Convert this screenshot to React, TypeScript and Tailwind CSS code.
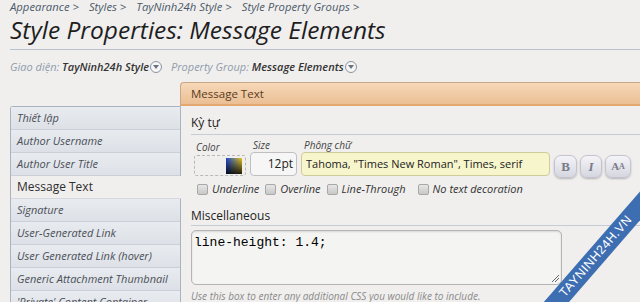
import React from "react";

const sideItems = [
  "Thiết lập",
  "Author Username",
  "Author User Title",
  "Message Text",
  "Signature",
  "User-Generated Link",
  "User Generated Link (hover)",
  "Generic Attachment Thumbnail",
  "'Private' Content Container",
];

function DropCircle() {
  return (
    <span className="inline-flex items-center justify-center w-[12px] h-[12px] rounded-full border border-[#8a94a0] bg-[#f6f6f6] ml-[1px] align-middle">
      <svg width="6" height="4" viewBox="0 0 6 4"><path d="M0 0h6L3 4z" fill="#6a7480" /></svg>
    </span>
  );
}

function Check({ label }: { label: string }) {
  return (
    <span className="flex items-center gap-[4px]">
      <span className="w-[11px] h-[11px] rounded-[2px] border border-[#a8a8a8] bg-[linear-gradient(#e6e6e6,#c8c8c8)]" />
      <span className="italic text-[11px] text-[#333]">{label}</span>
    </span>
  );
}

function StyleBtn({ children, extra }: { children: React.ReactNode; extra: string }) {
  return (
    <span className={`flex items-center justify-center h-[23px] rounded-[7px] border border-[#c4c4d0] bg-[linear-gradient(#f4f4f8,#d6d6e0)] shadow-[0_1px_2px_rgba(0,0,0,0.25)] text-[#7a7a88] font-bold ${extra}`} style={{ fontFamily: '"Liberation Serif", serif' }}>
      {children}
    </span>
  );
}

export default function App() {
  return (
    <div className="relative w-[640px] h-[302px] overflow-hidden bg-[#f0efee] text-[#333]" style={{ fontFamily: '"Open Sans", "DejaVu Sans", sans-serif' }}>
      {/* breadcrumb */}
      <div className="pl-[10px] h-[14px] text-[11.3px] leading-[13px] italic text-[#4c5a6a] flex gap-[10px]">
        <span>Appearance &gt;</span>
        <span>Styles &gt;</span>
        <span>TayNinh24h Style &gt;</span>
        <span>Style Property Groups &gt;</span>
      </div>

      {/* title */}
      <h1 className="pl-[10px] h-[35px] text-[24.5px] leading-[32px] italic text-[#1e1e1e]">
        Style Properties: Message Elements
      </h1>
      <div className="ml-[10px] border-t border-[#b8c2cc]" />

      {/* filters */}
      <div className="pl-[10px] mt-[9px] h-[16px] flex items-center text-[11px] italic">
        <span className="text-[#8f9cab]">Giao diện:&nbsp;</span>
        <span className="text-[#333] font-semibold">TayNinh24h Style</span>
        <DropCircle />
        <span className="text-[#8f9cab] ml-[9px]">Property Group:&nbsp;</span>
        <span className="text-[#333] font-semibold">Message Elements</span>
        <DropCircle />
      </div>

      {/* main */}
      <div className="flex mt-[7px]">
        {/* sidebar */}
        <div className="w-[170px] ml-[10px] mt-[24px] flex flex-col border-l border-t border-[#aab4c0] rounded-tl-[3px]">
          {sideItems.map((it) =>
            it === "Message Text" ? (
              <div key={it} className="relative z-10 h-[23px] -mr-px pl-[6px] flex items-center bg-[#f0efee] text-[12px] text-[#2e2e2e] border-b border-[#d4d8de]">
                {it}
              </div>
            ) : (
              <div key={it} className="h-[23px] pl-[6px] flex items-center bg-[linear-gradient(#e8ebef,#dde1e7)] italic text-[11px] text-[#4a4f58] border-b border-[#c9d0d8] shrink-0">
                {it}
              </div>
            )
          )}
        </div>

        {/* content panel */}
        <div className="flex-1 flex flex-col">
          <div className="h-[24px] pl-[10px] flex items-center rounded-tl-[4px] border-t border-l border-[#c8a888] border-b-2 border-b-[#e2a870] bg-[linear-gradient(#f6d8b8,#ebbf94)] text-[11.5px] text-[#5a3c22]">
            Message Text
          </div>
          <div className="flex-1 border-l border-[#aab4c0] pl-[10px] pt-[9px]">
            <div className="text-[12px] text-[#222] pb-[3px] border-b border-[#c4ccd6] leading-[16px]">Kỳ tự</div>

            <div className="flex gap-[4px] mt-[4px] pl-[3px] items-end">
              <div className="flex flex-col w-[52px]">
                <span className="italic text-[10px] leading-[13px] text-[#444] pl-[2px]">Color</span>
                <div className="h-[21px] mt-[1px] border border-dashed border-[#b8b8b8] rounded-[3px] flex items-center justify-end pr-[3px]">
                  <span className="w-[16px] h-[16px] bg-[linear-gradient(to_bottom,transparent,rgba(0,0,0,0.85)),linear-gradient(to_right,#1a4ad8,#e8c820)]" />
                </div>
              </div>
              <div className="flex flex-col w-[47px]">
                <span className="italic text-[10px] leading-[13px] text-[#444] pl-[3px]">Size</span>
                <div className="h-[24px] border border-[#c0c0c0] rounded-[4px] bg-[#f6f6f6] flex items-center justify-end pr-[3px] text-[12px] text-[#222]">12pt</div>
              </div>
              <div className="flex flex-col w-[249px]">
                <span className="italic text-[10px] leading-[13px] text-[#444] pl-[3px]">Phông chữ</span>
                <div className="h-[24px] border border-[#cfcc9a] rounded-[4px] bg-[#f7f5cc] flex items-center pl-[4px] text-[11px] text-[#222] whitespace-nowrap">
                  Tahoma, "Times New Roman", Times, serif
                </div>
              </div>
              <div className="flex gap-[3px] mb-[-2px]">
                <StyleBtn extra="w-[23px] text-[13px]">B</StyleBtn>
                <StyleBtn extra="w-[22px] text-[13px] italic">I</StyleBtn>
                <StyleBtn extra="w-[26px] text-[11px]"><span>A</span><span className="text-[8px]">A</span></StyleBtn>
              </div>
            </div>

            <div className="flex items-center gap-[6px] mt-[5px] pl-[6px]">
              <Check label="Underline" />
              <Check label="Overline" />
              <Check label="Line-Through" />
              <span className="w-[0px]" />
              <Check label="No text decoration" />
            </div>

            <div className="mt-[10px] text-[12px] text-[#222] pb-[1px] border-b border-[#c4ccd6] leading-[16px]">Miscellaneous</div>

            <div className="relative mt-[4px] w-[371px] h-[55px] rounded-[5px] border border-[#b4b4b4] bg-[#f4f4f3] shadow-[inset_0_1px_2px_rgba(0,0,0,0.12)] pl-[2px] pt-[4px] text-[13px] leading-[15px] text-[#000]" style={{ fontFamily: '"Liberation Mono", monospace' }}>
              line-height: 1.4;
              <svg className="absolute right-[2px] bottom-[2px]" width="8" height="8" viewBox="0 0 8 8">
                <path d="M1 8L8 1M4 8L8 4" stroke="#666" strokeWidth="1" />
              </svg>
            </div>
            <div className="mt-[4px] italic text-[10px] text-[#8a8a8a]">Use this box to enter any additional CSS you would like to include.</div>
          </div>
        </div>
      </div>

      {/* watermark */}
      <div className="absolute left-[491px] top-[247px] w-[210px] h-[19px] rotate-[-49deg] bg-[#3e6eb2] flex items-center justify-center text-white text-[12.5px] tracking-[0.5px]" style={{ fontFamily: '"Liberation Sans", sans-serif' }}>
        TAYNINH24H.VN
      </div>
    </div>
  );
}
